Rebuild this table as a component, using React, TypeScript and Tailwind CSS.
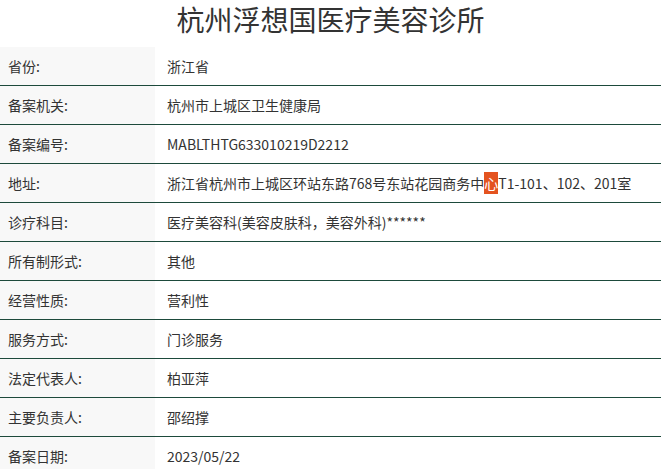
const rows: { label: string; value: React.ReactNode }[] = [
  { label: '省份:', value: '浙江省' },
  { label: '备案机关:', value: '杭州市上城区卫生健康局' },
  { label: '备案编号:', value: 'MABLTHTG633010219D2212' },
  {
    label: '地址:',
    value: (
      <>
        浙江省杭州市上城区环站东路768号东站花园商务中
        <span className="inline-block leading-[22px] bg-[#e4531f] text-white">心</span>
        T1-101、102、201室
      </>
    ),
  },
  { label: '诊疗科目:', value: '医疗美容科(美容皮肤科，美容外科)******' },
  { label: '所有制形式:', value: '其他' },
  { label: '经营性质:', value: '营利性' },
  { label: '服务方式:', value: '门诊服务' },
  { label: '法定代表人:', value: '柏亚萍' },
  { label: '主要负责人:', value: '邵绍撑' },
  { label: '备案日期:', value: '2023/05/22' },
];

export default function App() {
  return (
    <div className="w-[661px] h-[469px] overflow-hidden bg-white font-['Microsoft_YaHei','Noto_Sans_CJK_SC',sans-serif] text-[#333]">
      <h1 className="h-[47px] text-center text-[28px] leading-[38px] text-[#333]">
        杭州浮想国医疗美容诊所
      </h1>
      <div>
        {rows.map((r) => (
          <div key={r.label} className="flex h-[39px] border-b border-[#1d4a3b]">
            <div className="w-[155px] shrink-0 bg-[#f8f8f8] pl-2 flex items-center text-[14px]">
              {r.label}
            </div>
            <div className="flex-1 pl-3 flex items-center text-[14px] whitespace-nowrap">
              <span>{r.value}</span>
            </div>
          </div>
        ))}
      </div>
    </div>
  );
}
